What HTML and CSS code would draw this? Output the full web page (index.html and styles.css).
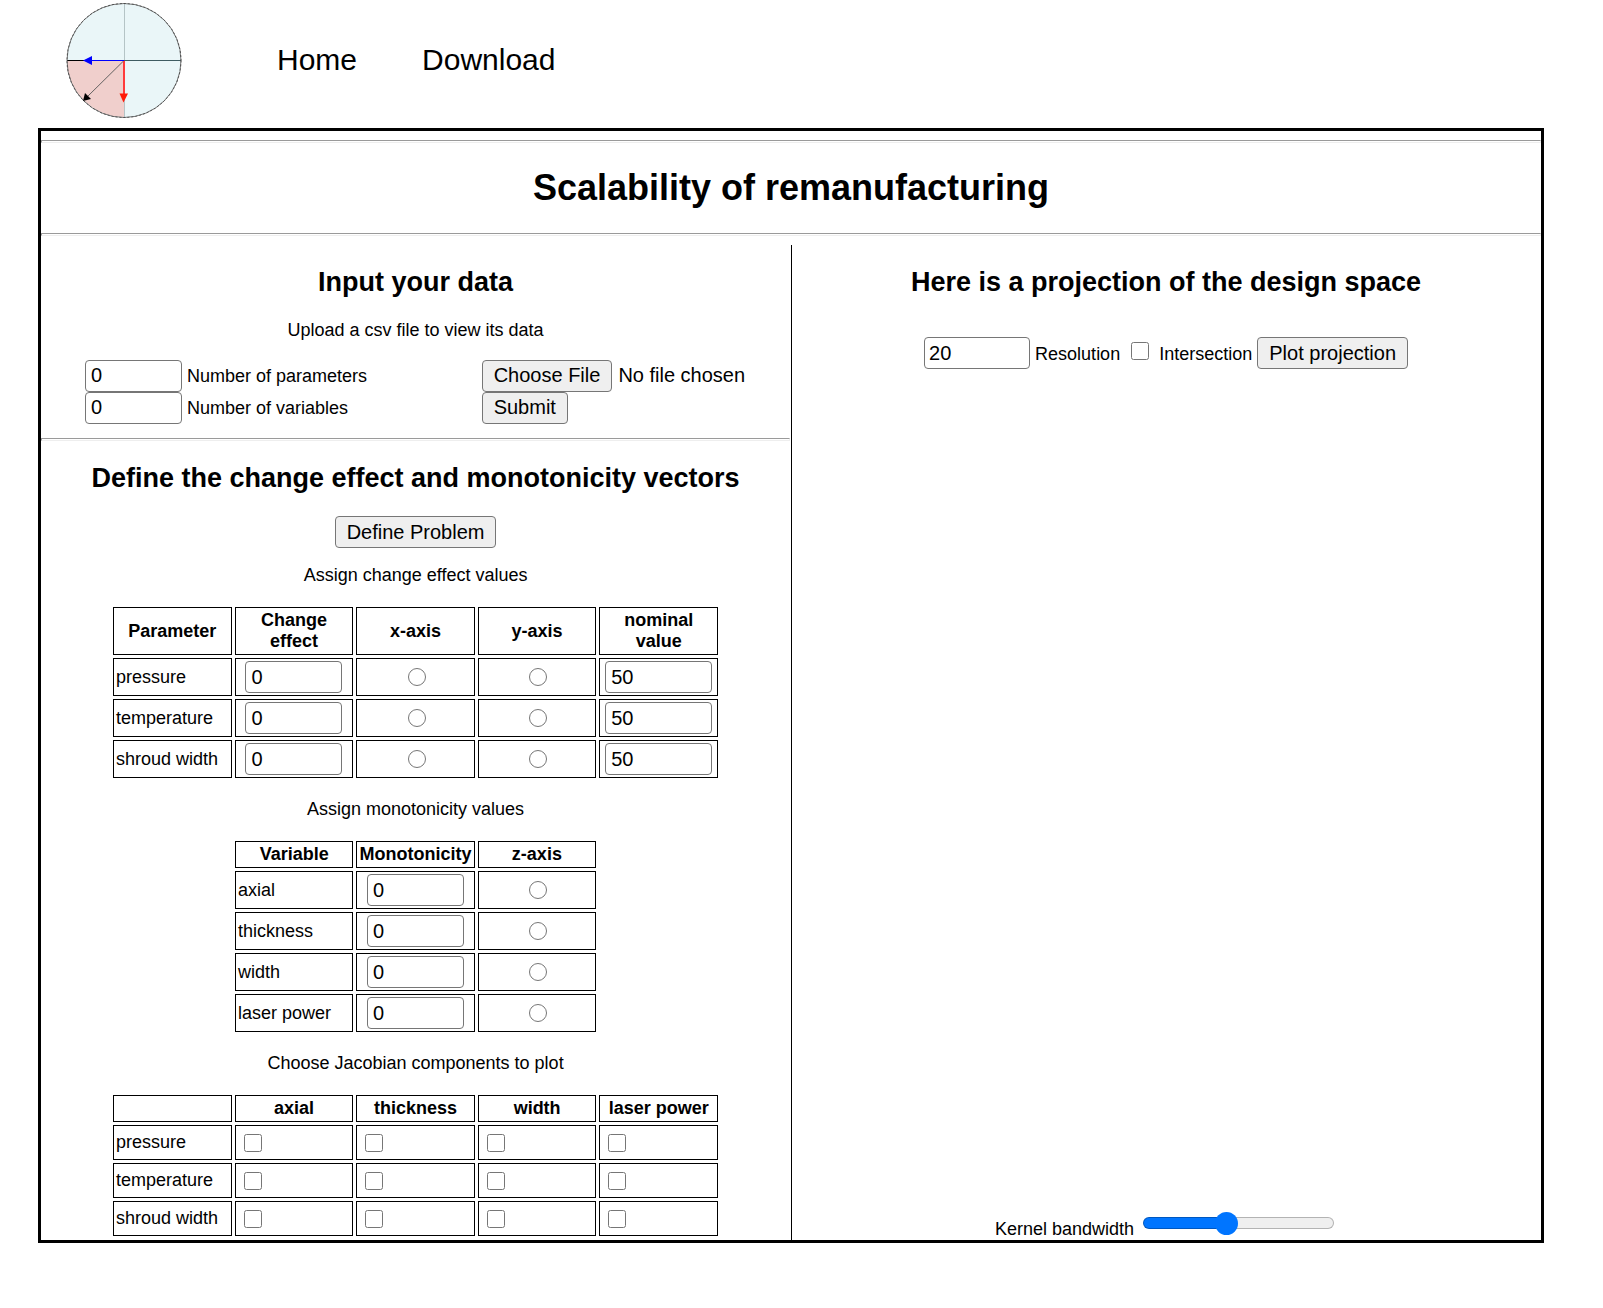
FILE: index.html
```html
<!DOCTYPE html>
<html lang="en">
<head>
<meta charset="utf-8">
<title>Scalability of remanufacturing</title>
<link rel="stylesheet" href="styles.css">
</head>
<body>
<header class="topbar">
  <svg class="logo" viewBox="0 0 116 116" role="img" aria-label="Logo">
    <circle cx="58" cy="58.500" r="57" fill="#eaf6f8"/>
    <path d="M58 58H1A57 57 0 0 0 58 115Z" fill="#f0cfcc"/>
    <path d="M58.500 1V115" stroke="#b5c4c6"/>
    <path d="M58 58.500H115" stroke="#3f5c62"/>
    <path d="M1 58.500H20" stroke="#000"/>
    <circle cx="58" cy="58.500" r="57" fill="none" stroke="#666" stroke-width="0.900"/>
    <circle cx="58" cy="58.500" r="57" fill="none" stroke="#333" stroke-width="0.700" stroke-dasharray="2 2"/>
    <path d="M58 58.500L20 96" stroke="#555" stroke-width="0.900"/>
    <path d="M17 99L19 91L25 97Z" fill="#000"/>
    <path d="M58 58.500H24" stroke="#00f" stroke-width="1.200"/>
    <path d="M17 58.500L26 54V63Z" fill="#00f"/>
    <path d="M58 59V93" stroke="#ff3a3a" stroke-width="2"/>
    <path d="M57.500 100.500L53.500 91.500H62Z" fill="#ff1a08"/>
  </svg>
  <nav class="nav">
    <a href="#">Home</a>
    <a href="#">Download</a>
  </nav>
</header>
<main class="frame">
  <hr>
  <h1>Scalability of remanufacturing</h1>
  <hr>
  <div class="columns">
    <section class="inputs">
      <h2>Input your data</h2>
      <p>Upload a csv file to view its data</p>
      <form class="upload">
        <div>
          <div class="line"><input class="num" type="number" id="params" value="0"> <label for="params">Number of parameters</label></div>
          <div class="line"><input class="num" type="number" id="vars" value="0"> <label for="vars">Number of variables</label></div>
        </div>
        <div>
          <div class="line"><input class="file" type="file" aria-label="Choose File"></div>
          <div class="line"><button class="btn" type="button">Submit</button></div>
        </div>
      </form>
      <hr>
      <h2>Define the change effect and monotonicity vectors</h2>
      <div class="action"><button class="btn" type="button">Define Problem</button></div>
      <p>Assign change effect values</p>
      <table class="five">
        <tr><th>Parameter</th><th>Change effect</th><th>x-axis</th><th>y-axis</th><th>nominal value</th></tr>
        <tr><td>pressure</td><td class="mid"><input class="num" type="number" value="0" aria-label="pressure change effect"></td><td class="mid"><input type="radio" name="x" aria-label="pressure x-axis"></td><td class="mid"><input type="radio" name="y" aria-label="pressure y-axis"></td><td class="mid"><input class="num wide" type="number" value="50" aria-label="pressure nominal value"></td></tr>
        <tr><td>temperature</td><td class="mid"><input class="num" type="number" value="0" aria-label="temperature change effect"></td><td class="mid"><input type="radio" name="x" aria-label="temperature x-axis"></td><td class="mid"><input type="radio" name="y" aria-label="temperature y-axis"></td><td class="mid"><input class="num wide" type="number" value="50" aria-label="temperature nominal value"></td></tr>
        <tr><td>shroud width</td><td class="mid"><input class="num" type="number" value="0" aria-label="shroud width change effect"></td><td class="mid"><input type="radio" name="x" aria-label="shroud width x-axis"></td><td class="mid"><input type="radio" name="y" aria-label="shroud width y-axis"></td><td class="mid"><input class="num wide" type="number" value="50" aria-label="shroud width nominal value"></td></tr>
      </table>
      <p>Assign monotonicity values</p>
      <table class="three">
        <tr><th>Variable</th><th>Monotonicity</th><th>z-axis</th></tr>
        <tr><td>axial</td><td class="mid"><input class="num" type="number" value="0" aria-label="axial monotonicity"></td><td class="mid"><input type="radio" name="z" aria-label="axial z-axis"></td></tr>
        <tr><td>thickness</td><td class="mid"><input class="num" type="number" value="0" aria-label="thickness monotonicity"></td><td class="mid"><input type="radio" name="z" aria-label="thickness z-axis"></td></tr>
        <tr><td>width</td><td class="mid"><input class="num" type="number" value="0" aria-label="width monotonicity"></td><td class="mid"><input type="radio" name="z" aria-label="width z-axis"></td></tr>
        <tr><td>laser power</td><td class="mid"><input class="num" type="number" value="0" aria-label="laser power monotonicity"></td><td class="mid"><input type="radio" name="z" aria-label="laser power z-axis"></td></tr>
      </table>
      <p>Choose Jacobian components to plot</p>
      <table class="five checks">
        <tr><th></th><th>axial</th><th>thickness</th><th>width</th><th>laser power</th></tr>
        <tr><td>pressure</td><td><input type="checkbox" aria-label="pressure axial"></td><td><input type="checkbox" aria-label="pressure thickness"></td><td><input type="checkbox" aria-label="pressure width"></td><td><input type="checkbox" aria-label="pressure laser power"></td></tr>
        <tr><td>temperature</td><td><input type="checkbox" aria-label="temperature axial"></td><td><input type="checkbox" aria-label="temperature thickness"></td><td><input type="checkbox" aria-label="temperature width"></td><td><input type="checkbox" aria-label="temperature laser power"></td></tr>
        <tr><td>shroud width</td><td><input type="checkbox" aria-label="shroud width axial"></td><td><input type="checkbox" aria-label="shroud width thickness"></td><td><input type="checkbox" aria-label="shroud width width"></td><td><input type="checkbox" aria-label="shroud width laser power"></td></tr>
      </table>
    </section>
    <section class="plot">
      <div>
        <h2>Here is a projection of the design space</h2>
        <div class="controls">
          <input class="num wide" type="number" id="res" value="20">
          <label for="res">Resolution</label>
          <input type="checkbox" id="inter">
          <label for="inter">Intersection</label>
          <button class="btn" type="button">Plot projection</button>
        </div>
      </div>
      <div class="bandwidth">
        <label for="kernel">Kernel bandwidth</label>
        <input class="slider" type="range" id="kernel" min="0" max="100" value="43">
      </div>
    </section>
  </div>
</main>
</body>
</html>
```
FILE: styles.css
```css
* { box-sizing: border-box; }

body {
  margin: 0;
  background: #fff;
  color: #000;
  font: 18px/21px "Liberation Sans", Arial, sans-serif;
}

.topbar {
  display: flex;
  align-items: center;
  height: 128px;
  padding: 0 66px 9px;
}
.logo { width: 116px; height: 116px; }
.nav {
  display: flex;
  gap: 65px;
  margin-left: 95px;
  font-size: 30px;
  line-height: 34px;
}
.nav a { color: #000; text-decoration: none; }

.frame {
  margin: 0 59px 64px 38px;
  border: 3px solid #000;
}
hr {
  height: 3px;
  margin: 9px 0;
  border: 1px solid;
  border-color: #9a9a9a #eee #eee #9a9a9a;
}
h1 {
  margin: 24px 0;
  font-size: 36px;
  line-height: 42px;
  text-align: center;
}
h2 {
  margin: 22px 0;
  font-size: 27px;
  line-height: 31px;
  text-align: center;
}
p { margin: 18px 0; text-align: center; }

.columns { display: grid; grid-template-columns: 1fr 1fr; }
.inputs { display: flow-root; padding: 0 1px 1px 0; }
.plot {
  display: flex;
  flex-direction: column;
  justify-content: space-between;
  padding-right: 1px;
  border-left: 1px solid #000;
}

.upload {
  display: grid;
  grid-template-columns: 60% 40%;
  padding: 1px 44px 0;
  margin-bottom: 14px;
}
.line { height: 32px; white-space: nowrap; }
.action { height: 31px; text-align: center; }

input, button { font: 20px/23px "Liberation Sans", Arial, sans-serif; color: #000; }
.num {
  width: 97px;
  height: 32px;
  margin: 0;
  padding: 1px 5px;
  border: 1px solid #767676;
  border-radius: 4px;
  background: #fff;
}
.wide { width: 107px; }
.btn, .file::file-selector-button {
  height: 32px;
  padding: 1px 11px;
  border: 1px solid #767676;
  border-radius: 4px;
  background: #efefef;
  color: #000;
  font: 20px/23px "Liberation Sans", Arial, sans-serif;
}
.btn { margin: 0; vertical-align: top; }
.file { height: 32px; }
.file::file-selector-button { margin-right: 6px; }
.line .num, .line .btn, .file::file-selector-button { padding-bottom: 3px; }

input[type="radio"], input[type="checkbox"] {
  width: 18px;
  height: 18px;
  margin: 0 5px 0 6px;
}

table {
  margin: 0 auto;
  border-spacing: 3px;
  table-layout: fixed;
}
.five { width: 611px; }
.three { width: 367px; }
th, td {
  padding: 2px;
  border: 1px solid #000;
  text-align: left;
}
th { height: 27px; text-align: center; }
.mid { text-align: center; }
.mid input { display: block; margin: 0 auto; }
.mid input[type="radio"] { margin: 0 auto; }
.mid:has([type="radio"]) { padding-left: 4px; }
.checks td { height: 35px; }
.checks input { display: block; }

.controls { margin-top: 39px; text-align: center; }
.controls .num { width: 106px; padding-left: 4px; }
.controls .btn { vertical-align: baseline; }
.controls input[type="checkbox"] { margin-bottom: 2px; }

.bandwidth { text-align: center; }
.slider {
  appearance: none;
  width: 191px;
  height: 24px;
  margin: 0 3px 0 4px;
  background: none;
  vertical-align: baseline;
}
.slider::-webkit-slider-runnable-track {
  height: 12px;
  border: 1px solid rgba(0, 0, 0, 0.25);
  border-radius: 6px;
  background: linear-gradient(to right, #0075ff 44%, #efefef 44%) border-box;
}
.slider::-webkit-slider-thumb {
  appearance: none;
  width: 23px;
  height: 23px;
  margin-top: -6px;
  border-radius: 50%;
  background: #0075ff;
}
```
